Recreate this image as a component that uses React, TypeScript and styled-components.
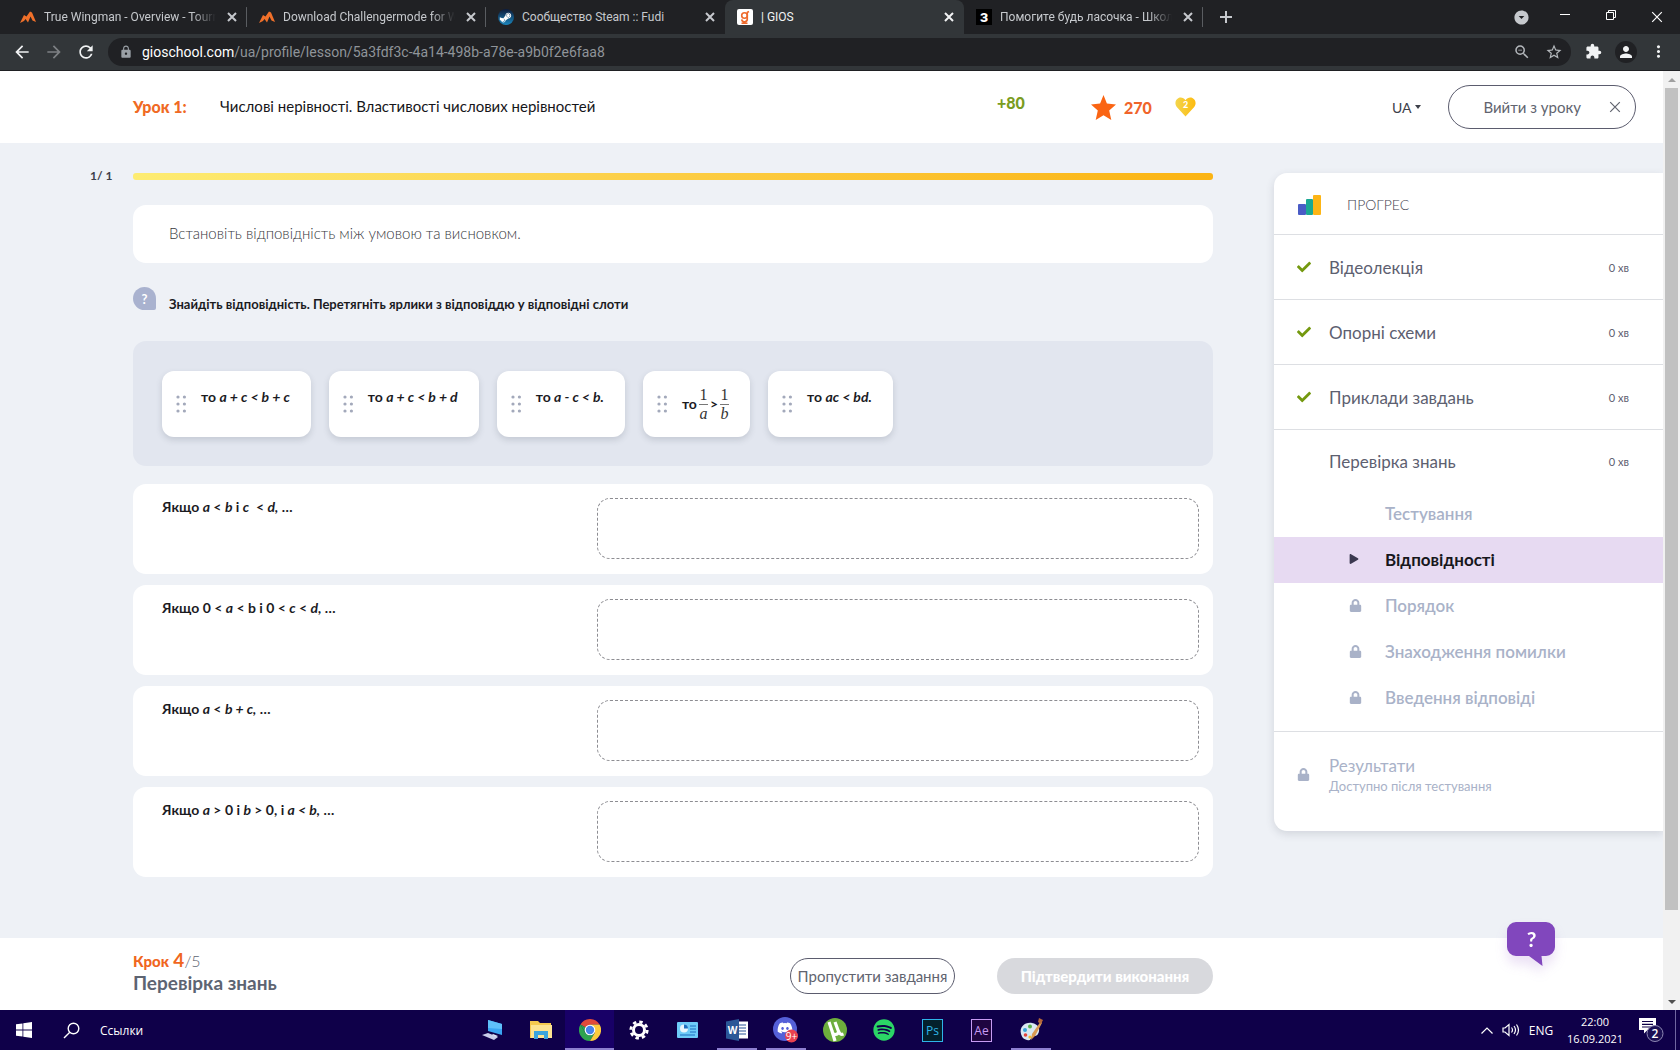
import React from "react";
import styled, { createGlobalStyle, css } from "styled-components";
import { FaCheck, FaDiscord, FaLock, FaPlay, FaSpotify, FaSteamSymbol } from "react-icons/fa";
import {
  MdArrowBack,
  MdArrowDropDownCircle,
  MdArrowForward,
  MdExtension,
  MdLock,
  MdMoreVert,
  MdPerson,
  MdRefresh,
  MdStarBorder,
  MdZoomOut,
} from "react-icons/md";

const ui = `"Open Sans", "Noto Sans", sans-serif`;
const chromeUi = `Roboto, "Open Sans", sans-serif`;
const brand = `Lato, "Open Sans", sans-serif`;

const GlobalStyle = createGlobalStyle`
  *, *::before, *::after { box-sizing: border-box; }
  body { margin: 0; background: #eef1f6; font-family: ${brand}; color: #1b1b1f; }
  button, select { font: inherit; color: inherit; background: none; border: 0; margin: 0; padding: 0; }
  svg { display: block; flex: none; }
  a { color: inherit; text-decoration: none; }
  h1, h2, p, ul { margin: 0; padding: 0; font: inherit; list-style: none; }
`;

const Screen = styled.div`
  display: flex;
  flex-direction: column;
  min-height: 100vh;
`;

/* ---------- browser ---------- */

const TabStrip = styled.div`
  display: flex;
  height: 34px;
  padding-left: 8px;
  background: #202124;
  color: #c6c9cd;
  font-family: ${chromeUi};
`;

const Tab = styled.div<{ $active?: boolean; $line?: boolean }>`
  display: flex;
  align-items: center;
  gap: 8px;
  width: 239px;
  height: 34px;
  padding: 0 7px 0 12px;
  font-size: 12px;
  border-radius: 8px 8px 0 0;
  background: ${(p) => (p.$active ? "#323639" : "transparent")};
  color: ${(p) => (p.$active ? "#f1f3f4" : "#c6c9cd")};
  ${(p) =>
    p.$line &&
    css`
      background: linear-gradient(#5a5d61, #5a5d61) right center / 1px 20px no-repeat;
    `}
`;

const TabTitle = styled.span<{ $fade?: boolean }>`
  flex: 1;
  overflow: hidden;
  white-space: nowrap;
  line-height: 18px;
  ${(p) =>
    p.$fade &&
    css`
      mask-image: linear-gradient(90deg, #000 86%, transparent);
    `}
`;

const IconButton = styled.button<{ $w?: number; $dim?: boolean }>`
  display: flex;
  flex: none;
  align-items: center;
  justify-content: center;
  width: ${(p) => p.$w ?? 16}px;
  color: ${(p) => (p.$dim ? "#7d8084" : "inherit")};
`;

const WindowControls = styled.div`
  display: flex;
  align-items: center;
  margin-left: auto;
  color: #fff;
`;

const Toolbar = styled.div`
  display: flex;
  align-items: center;
  height: 37px;
  padding: 0 5px 1px 6px;
  background: #323639;
  border-bottom: 1px solid #1f2023;
  color: #f1f3f4;
`;

const AddressBar = styled.div`
  display: flex;
  flex: 1;
  align-items: center;
  height: 28px;
  margin: 0 6px;
  padding: 0 1px 0 11px;
  border-radius: 14px;
  background: #202124;
  color: #b4b8bc;
  font-family: ${chromeUi};
  font-size: 14px;
`;

const Address = styled.div`
  flex: 1;
  margin-left: 9px;
  color: #8f9499;
  line-height: 20px;
  white-space: nowrap;
  overflow: hidden;
  b { font-weight: 400; color: #fff; }
`;

const Avatar = styled.span`
  display: flex;
  align-items: center;
  justify-content: center;
  width: 22px;
  height: 22px;
  border-radius: 50%;
  background: #202124;
`;

const Viewport = styled.div`
  display: flex;
  flex: 1;
`;

const Page = styled.div`
  display: flex;
  flex: 1;
  flex-direction: column;
  min-width: 0;
`;

const Scrollbar = styled.div`
  display: flex;
  flex-direction: column;
  width: 17px;
  background: #f1f1f1;
`;

const ScrollArrow = styled.button<{ $down?: boolean }>`
  display: flex;
  align-items: center;
  justify-content: center;
  height: 17px;
  &::after {
    content: "";
    border: 4px solid transparent;
    border-top-width: ${(p) => (p.$down ? 4 : 0)}px;
    border-bottom-width: ${(p) => (p.$down ? 0 : 4)}px;
    border-top-color: #505050;
    border-bottom-color: #a0a0a0;
  }
`;

const ScrollTrack = styled.div`
  flex: 1;
  padding: 0 2px;
`;

const ScrollThumb = styled.div`
  height: calc(91% - 2px);
  background: #c1c1c1;
`;

/* ---------- lesson header ---------- */

const Header = styled.header`
  display: flex;
  align-items: center;
  height: 72px;
  padding: 0 27px 0 133px;
  background: #fff;
`;

const Lesson = styled.div`
  display: flex;
  flex: 1;
  align-items: center;
  padding-bottom: 2px;
  color: #16161a;
  font-size: 15px;
`;

const LessonNumber = styled.b`
  width: 87px;
  color: #f06a24;
  font-size: 16px;
  font-weight: 900;
`;

const Score = styled.div`
  display: flex;
  align-items: center;
  width: 395px;
  font-size: 16px;
  font-weight: 900;
`;

const Gained = styled.span`
  width: 94px;
  padding-bottom: 10px;
  color: #7a9c1e;
`;

const Stars = styled.span`
  display: flex;
  align-items: center;
  gap: 8px;
  width: 84px;
  color: #f0642a;
`;

const Language = styled.label`
  display: flex;
  align-items: center;
  gap: 3px;
  width: 56px;
  color: #3d4049;
  font-size: 14px;
  select { appearance: none; width: 20px; }
`;

const Caret = styled.span`
  border: 3px solid transparent;
  border-top: 4px solid #3d4049;
  border-bottom: 0;
`;

const OutlineButton = styled.button<{ $w: number; $h: number }>`
  display: flex;
  align-items: center;
  justify-content: center;
  gap: 28px;
  width: ${(p) => p.$w}px;
  height: ${(p) => p.$h}px;
  border: 1px solid #5b5c6e;
  border-radius: ${(p) => p.$h / 2}px;
  background: #fff;
  color: #61646f;
  font-size: 15px;
  white-space: nowrap;
`;

const ExitButton = styled(OutlineButton)`
  justify-content: flex-end;
  padding-right: 14px;
`;

/* ---------- lesson body ---------- */

const Body = styled.main`
  display: grid;
  grid-template-columns: 43px minmax(0, 1fr) 389px;
  flex: 1;
  align-items: start;
  padding: 30px 0 60px 90px;
  background: #eef1f6;
`;

const Counter = styled.span`
  color: #3d4049;
  font-size: 12px;
  font-weight: 700;
  line-height: 5px;
`;

const Work = styled.div`
  display: flex;
  flex-direction: column;
  margin-right: 61px;
`;

const ProgressLine = styled.div`
  height: 7px;
  border-radius: 3px;
  background: linear-gradient(90deg, #fdec72, #fcd049 45%, #fbb413);
`;

const Statement = styled.p`
  margin-top: 25px;
  padding: 17px 36px 19px;
  border-radius: 13px;
  background: #fff;
  color: #37383d;
  font-size: 15px;
  font-weight: 300;
  line-height: 22px;
`;

const Hint = styled.div`
  display: flex;
  gap: 13px;
  margin-top: 24px;
  font-size: 13px;
  font-weight: 700;
  line-height: 20px;
  p { padding-top: 7px; }
`;

const HintMark = styled.span`
  display: flex;
  align-items: center;
  justify-content: center;
  width: 23px;
  height: 23px;
  border-radius: 12px 12px 2px 12px;
  background: #a9b2cf;
  color: #fff;
  font-size: 13px;
`;

const Labels = styled.div`
  display: flex;
  flex-wrap: wrap;
  gap: 18px;
  margin-top: 27px;
  padding: 30px 29px 29px;
  border-radius: 13px;
  background: #e2e6ef;
`;

const Label = styled.button`
  display: flex;
  align-items: center;
  gap: 15px;
  height: 66px;
  padding: 0 21px 0 14px;
  border-radius: 12px;
  background: #fff;
  box-shadow: 0 3px 6px rgba(60, 70, 90, 0.18);
  font-size: 14px;
  font-weight: 700;
  line-height: 20px;
  white-space: nowrap;
`;

const LabelText = styled.span<{ $middle?: boolean }>`
  display: flex;
  align-items: center;
  gap: 2px;
  padding-bottom: ${(p) => (p.$middle ? 0 : 14)}px;
`;

const Fraction = styled.span`
  display: inline-flex;
  flex-direction: column;
  align-items: center;
  width: 9px;
  color: #333;
  font-family: "Liberation Serif", serif;
  font-size: 16px;
  font-weight: 400;
  line-height: 18px;
  span { width: 9px; border-bottom: 1px solid #777; }
`;

const Slots = styled.div`
  display: flex;
  flex-direction: column;
  gap: 11px;
  margin-top: 18px;
`;

const Slot = styled.div`
  display: grid;
  grid-template-columns: minmax(0, 435fr) minmax(0, 602fr);
  height: 90px;
  padding: 14px 14px 15px 29px;
  border-radius: 13px;
  background: #fff;
  font-size: 14px;
  font-weight: 700;
  line-height: 17px;
`;

const DropZone = styled.div`
  border: 1px dashed #8d8d92;
  border-radius: 13px;
`;

/* ---------- progress panel ---------- */

const Panel = styled.aside`
  border-radius: 13px 0 0 13px;
  background: #fff;
  box-shadow: 0 3px 8px rgba(60, 70, 90, 0.16);
  color: #5d6070;
`;

const PanelHead = styled.h2`
  display: flex;
  align-items: center;
  gap: 26px;
  height: 62px;
  padding: 2px 0 0 24px;
  border-bottom: 1px solid #dddfe3;
  font-size: 14px;
  font-weight: 300;
  color: #3f424e;
`;

const Step = styled.a<{ $open?: boolean }>`
  display: flex;
  align-items: center;
  height: ${(p) => (p.$open ? 62 : 65)}px;
  padding: 0 34px 0 23px;
  border-bottom: ${(p) => (p.$open ? "0" : "1px solid #dddfe3")};
  font-size: 17px;
  small { margin-left: auto; font-size: 11px; }
`;

const StepMark = styled.span`
  width: 32px;
`;

const SubSteps = styled.ul`
  margin-top: -1px;
  padding-bottom: 10px;
  border-bottom: 1px solid #dddfe3;
`;

const SubStep = styled.li<{ $current?: boolean }>`
  display: flex;
  align-items: center;
  height: 46px;
  padding: 0 0 2px 75px;
  background: ${(p) => (p.$current ? "#e7daf2" : "transparent")};
  color: ${(p) => (p.$current ? "#17171c" : "#a9b2c8")};
  font-size: 17px;
  font-weight: ${(p) => (p.$current ? 700 : 600)};
  svg { color: ${(p) => (p.$current ? "#3b3850" : "#a9b2c8")}; }
`;

const SubMark = styled.span`
  width: 36px;
`;

const Results = styled.div`
  display: flex;
  align-items: center;
  height: 99px;
  padding: 0 23px 14px;
  color: #a9b2c8;
  font-size: 17px;
  line-height: 22px;
  small { display: block; font-size: 13px; line-height: 18px; }
`;

/* ---------- footer ---------- */

const Footer = styled.footer`
  position: relative;
  display: flex;
  align-items: center;
  height: 72px;
  padding: 4px 450px 0 133px;
  background: #fff;
`;

const StepName = styled.div`
  flex: 1;
  padding-bottom: 10px;
  color: #5d6472;
  font-size: 19px;
  font-weight: 700;
  line-height: 22px;
`;

const StepCount = styled.p`
  font-size: 16px;
  font-weight: 300;
  b { color: #f0661e; font-size: 15px; font-weight: 900; }
  strong { color: #f0661e; font-size: 19px; font-weight: 700; }
`;

const ConfirmButton = styled.button`
  width: 216px;
  height: 36px;
  margin-left: 42px;
  border-radius: 18px;
  background: #d8d9dd;
  color: #fff;
  font-size: 15px;
  font-weight: 900;
  white-space: nowrap;
`;

const ChatButton = styled.button`
  position: absolute;
  right: 108px;
  top: -16px;
  filter: drop-shadow(0 8px 6px rgba(130, 70, 190, 0.16));
`;

/* ---------- taskbar ---------- */

const Taskbar = styled.div`
  display: flex;
  align-items: stretch;
  height: 40px;
  background: #0f0049;
  color: #fff;
  font-family: ${ui};
  font-size: 12px;
`;

const Links = styled.button`
  display: flex;
  align-items: center;
  width: 372px;
  padding-left: 5px;
`;

const TaskButton = styled.button<{ $state?: "open" | "front" }>`
  display: flex;
  align-items: center;
  justify-content: center;
  width: 49px;
  background: ${(p) =>
    p.$state === "front"
      ? "linear-gradient(#8d7fd0, #8d7fd0) bottom / 100% 2px no-repeat, #180067"
      : p.$state === "open"
      ? "linear-gradient(#8d7fd0, #8d7fd0) bottom / 40px 2px no-repeat"
      : "none"};
`;

const Tray = styled.div`
  display: flex;
  align-items: center;
  margin-left: auto;
  padding-right: 4px;
`;

const Clock = styled.time`
  width: 74px;
  font-size: 11px;
  text-align: center;
  line-height: 17px;
`;

const ShowDesktop = styled.button`
  width: 1px;
  height: 40px;
  margin-left: 5px;
  background: #6f66a0;
`;

const AdobeTile = styled.span<{ $c: string; $bg: string }>`
  display: flex;
  align-items: center;
  justify-content: center;
  width: 21px;
  height: 23px;
  border: 1px solid ${(p) => p.$c};
  background: ${(p) => p.$bg};
  color: ${(p) => p.$c};
  font-size: 12px;
`;

/* ---------- drawings ---------- */

const Close = ({ size = 10, w = 2 }: { size?: number; w?: number }) => (
  <svg width={size} height={size} viewBox="0 0 10 10" stroke="currentColor" strokeWidth={w}>
    <path d="M1 1l8 8M9 1l-8 8" />
  </svg>
);

const Challenger = () => (
  <svg width="16" height="16" viewBox="0 0 16 16">
    <path d="M0 14l4-8 2.500 1.500L10 2.500l2 1 4 9.500-3.500-1.500-2-4-2.500 6-2.500-3.500L4 12z" fill="#f0702a" />
  </svg>
);

const Steam = () => (
  <svg width="16" height="16" viewBox="0 0 16 16">
    <defs>
      <linearGradient id="steam" x2="0" y2="1">
        <stop stopColor="#0d1b3a" />
        <stop offset="1" stopColor="#1a86bd" />
      </linearGradient>
    </defs>
    <circle cx="8" cy="8" r="8" fill="url(#steam)" />
    <FaSteamSymbol x="1" y="2" size={13} color="#fff" />
  </svg>
);

const Gios = () => (
  <svg width="16" height="16" viewBox="0 0 16 16" fill="none" stroke="#ee6a2c" strokeWidth="1.600">
    <rect width="16" height="16" rx="2" fill="#fff" stroke="none" />
    <circle cx="7.500" cy="6.500" r="2.800" />
    <path d="M10.300 3v6.500a2.800 2.800 0 0 1-5.600.8M4.500 14.300h6M10 3.500l2-1" />
  </svg>
);

const Znanija = styled.span`
  display: flex;
  flex: none;
  align-items: center;
  justify-content: center;
  width: 16px;
  height: 16px;
  background: #000;
  color: #fff;
  font-size: 13px;
  font-weight: 900;
`;

const Star = () => (
  <svg width="25" height="25" viewBox="0 0 25 25">
    <path d="M12.500 0l3.400 8.500 9.100.9-6.800 6.200L20.300 25l-7.800-4.800L4.700 25l2.100-9.400L0 9.400l9.100-.9z" fill="#fa6413" />
  </svg>
);

const Heart = () => (
  <svg width="21" height="20" viewBox="0 0 21 20">
    <defs>
      <linearGradient id="heart">
        <stop stopColor="#f3d54c" />
        <stop offset="1" stopColor="#fdbb10" />
      </linearGradient>
    </defs>
    <path d="M10.500 19.500L1.800 10C-.6 7 .2 2.500 3.600 1c2.600-1 5.300 0 6.900 2.200C12.100 1 14.800 0 17.400 1c3.400 1.500 4.200 6 1.800 9z" fill="url(#heart)" />
    <text x="10.500" y="11" fontSize="9" fontWeight="900" textAnchor="middle" fill="#fff">2</text>
  </svg>
);

const Bars = () => (
  <svg width="23" height="20" viewBox="0 0 23 20">
    <rect y="9" width="8" height="11" rx="1" fill="#4a5cc6" />
    <rect x="8" y="4" width="7" height="16" rx="1" fill="#1ba893" />
    <rect x="15" width="8" height="20" rx="1" fill="#fdb515" />
  </svg>
);

const Grip = () => (
  <svg width="10" height="18" viewBox="0 0 10 18" fill="#a3a9bb">
    {[2, 9, 16].map((y) => (
      <React.Fragment key={y}>
        <circle cx="2" cy={y} r="1.600" />
        <circle cx="8.400" cy={y} r="1.600" />
      </React.Fragment>
    ))}
  </svg>
);

const ChatBubble = () => (
  <svg width="48" height="44" viewBox="0 0 48 44">
    <path d="M9 0h30a9 9 0 0 1 9 9v16a9 9 0 0 1-9 9h-4.500l1 10L22 34H9a9 9 0 0 1-9-9V9a9 9 0 0 1 9-9z" fill="#8147bd" />
    <text x="24.500" y="25" fontSize="21" fontWeight="700" textAnchor="middle" fill="#fff">?</text>
  </svg>
);

const WindowsLogo = () => (
  <svg width="16" height="16" viewBox="0 0 16 16" fill="#fff">
    <path d="M0 2.300L6.500 1.400v6.200H0zM7.300 1.300L16 0v7.600H7.300zM0 8.400h6.500v6.200L0 13.700zM7.300 8.400H16V16l-8.700-1.300z" />
  </svg>
);

const SearchGlass = () => (
  <svg width="17" height="17" viewBox="0 0 17 17" fill="none" stroke="#fff" strokeWidth="1.400">
    <circle cx="10.500" cy="6.500" r="5.300" />
    <path d="M6.800 10.300L1 16" />
  </svg>
);

const Computer = () => (
  <svg width="22" height="22" viewBox="0 0 22 22">
    <path d="M7 1l14 4v11L7 12z" fill="#3aa5f2" />
    <path d="M7 1l14 4v5L7 9z" fill="#5fc0fa" />
    <path d="M1 16l6-2 10 4-4 3z" fill="#c9cdea" />
    <path d="M12 15l5 2-2 1-4-2z" fill="#dfe3f5" />
  </svg>
);

const Folder = () => (
  <svg width="22" height="20" viewBox="0 0 22 20">
    <path d="M0 1h8l2 2h11v15H0z" fill="#f5c94f" />
    <path d="M1 5h21v13H1z" fill="#fde491" />
    <path d="M4 11h14v8h-4v-4H8v4H4z" fill="#3aa4dd" />
  </svg>
);

const Chrome = () => (
  <svg width="22" height="22" viewBox="0 0 22 22">
    <path d="M11 11L1.470 5.500A11 11 0 0 1 20.530 5.500L11 5.500z" fill="#e04a3a" />
    <path d="M11 11L6.200 13.800 1.470 5.500z" fill="#2ea350" />
    <path d="M1.470 5.500L6.200 13.800 11 16.500 15.800 13.800 11 22A11 11 0 0 1 1.470 5.500z" fill="#2ea350" />
    <path d="M11 5.500h9.530A11 11 0 0 1 11 22l4.800-8.200z" fill="#fccb3d" />
    <circle cx="11" cy="11" r="5.300" fill="#fff" />
    <circle cx="11" cy="11" r="4.200" fill="#4683ea" />
  </svg>
);

const Gear = () => (
  <svg width="20" height="20" viewBox="0 0 20 20" fill="none" stroke="#fff">
    <circle cx="10" cy="10" r="5.500" strokeWidth="3" />
    <circle cx="10" cy="10" r="8.200" strokeWidth="2.800" strokeDasharray="3.440 3" />
  </svg>
);

const ControlPanel = () => (
  <svg width="21" height="16" viewBox="0 0 21 16">
    <rect width="21" height="16" rx="1" fill="#6ecbf8" />
    <circle cx="7" cy="6.500" r="4" fill="#e8f6fd" />
    <path d="M7 6.500V2.500a4 4 0 0 1 4 4z" fill="#1c6fc0" />
    <path d="M13 4h6M13 7h6M13 10h6M3 13h15" stroke="#1c6fc0" />
  </svg>
);

const Word = () => (
  <svg width="22" height="22" viewBox="0 0 22 22">
    <rect x="11" y="2.500" width="11" height="17" fill="#fff" />
    <path d="M13 6h7M13 9h7M13 12h7M13 15h7" stroke="#2b5797" strokeWidth="1.200" />
    <path d="M0 2.500L13 0v22L0 19.500z" fill="#2b5797" />
    <text x="6.500" y="15" fontSize="10" fontWeight="700" textAnchor="middle" fill="#fff">W</text>
  </svg>
);

const Discord = () => (
  <svg width="25" height="26" viewBox="0 0 25 26">
    <circle cx="12" cy="12" r="12" fill="#5560d8" />
    <FaDiscord x="4" y="3" size={16} color="#fff" />
    <circle cx="18.500" cy="19" r="6.500" fill="#e8424f" />
    <text x="18.500" y="23" fontSize="10" textAnchor="middle" fill="#fff">9+</text>
  </svg>
);

const Torrent = () => (
  <svg width="24" height="24" viewBox="0 0 24 24" fill="none" stroke="#fff" strokeWidth="3.200">
    <circle cx="12" cy="12" r="12" fill="#6dae3c" stroke="none" />
    <path d="M6 4l3.500 10.500c1 3 6 2.500 6-1L12 4M15.500 13c1 3 2.500 4 5 3M9 13l3 10" />
  </svg>
);

const Palette = () => (
  <svg width="24" height="24" viewBox="0 0 24 24">
    <path d="M2 16C0 9 6 4 13 5c6 1 9 6 6 11-2 3-4 1-6 3s-1 4-5 3-5-3-6-6z" fill="#d9e8f2" />
    <circle cx="6" cy="12" r="2" fill="#38a5d8" />
    <circle cx="11" cy="8.500" r="2" fill="#59b34a" />
    <circle cx="6.500" cy="17" r="1.800" fill="#e3453c" />
    <circle cx="11" cy="19" r="1.600" fill="#f5b92d" />
    <path d="M22 3L13 16l-1 6 4-4 7-13z" fill="#d99a52" />
    <path d="M20 0l4 2-2 4-3-2z" fill="#b5673a" />
  </svg>
);

const Speaker = () => (
  <svg width="18" height="14" viewBox="0 0 18 14" fill="none" stroke="#fff" strokeWidth="1.200">
    <path d="M1 5h2l4-3.500v11L3 9H1zM9.500 4.500q2 2.500 0 5M12 3q3 4 0 8M14.500 1.500q4 5.500 0 11" />
  </svg>
);

const Notifications = () => (
  <svg width="26" height="26" viewBox="0 0 26 26">
    <path d="M1 1h17v12H9.500L6 16.500V13H1z" fill="#fff" />
    <path d="M4 4.500h11M4 7.300h11M4 10h11" stroke="#0f0049" strokeWidth="1.200" />
    <circle cx="17" cy="16.500" r="8" fill="#1b1054" stroke="#8f89b5" />
    <text x="17" y="21" fontSize="12" fontWeight="600" textAnchor="middle" fill="#fff">2</text>
  </svg>
);

/* ---------- content ---------- */

const tabs = [
  { title: "True Wingman - Overview - Tourn", icon: <Challenger />, line: true, fade: true },
  { title: "Download Challengermode for W", icon: <Challenger />, line: true, fade: true },
  { title: "Сообщество Steam :: Fudi", icon: <Steam /> },
  { title: "| GIOS", icon: <Gios />, active: true },
  { title: "Помогите будь ласочка - Школ", icon: <Znanija>З</Znanija>, line: true, fade: true },
];

const labels = [
  <>то <i>a + c &lt; b + c</i></>,
  <>то <i>a + c &lt; b + d</i></>,
  <>то <i>a - c &lt; b.</i></>,
  null,
  <>то <i>ac &lt; bd.</i></>,
];

const conditions = [
  <>Якщо <i>a</i> &lt; <i>b</i> і <i>c</i>&nbsp; &lt; <i>d,</i> …</>,
  <>Якщо 0 &lt; <i>a</i> &lt; b і 0 &lt; <i>c</i> &lt; <i>d,</i> …</>,
  <>Якщо <i>a</i> &lt; <i>b + c,</i> …</>,
  <>Якщо <i>a</i> &gt; 0 і <i>b</i> &gt; 0, і <i>a &lt; b,</i> …</>,
];

const finished = ["Відеолекція", "Опорні схеми", "Приклади завдань"];
const locked = ["Порядок", "Знаходження помилки", "Введення відповіді"];

const apps: { name: string; icon: React.ReactNode; state?: "open" | "front" }[] = [
  { name: "Computer", icon: <Computer /> },
  { name: "Explorer", icon: <Folder /> },
  { name: "Chrome", icon: <Chrome />, state: "front" },
  { name: "Settings", icon: <Gear /> },
  { name: "Control panel", icon: <ControlPanel /> },
  { name: "Word", icon: <Word />, state: "open" },
  { name: "Discord", icon: <Discord />, state: "open" },
  { name: "Torrent", icon: <Torrent /> },
  { name: "Spotify", icon: <FaSpotify size={22} color="#2bd566" /> },
  { name: "Photoshop", icon: <AdobeTile $c="#2fb4e8" $bg="#04202c">Ps</AdobeTile> },
  { name: "After Effects", icon: <AdobeTile $c="#c79bf2" $bg="#1f0540">Ae</AdobeTile> },
  { name: "Paint", icon: <Palette />, state: "open" },
];

export default function App() {
  return (
    <Screen>
      <GlobalStyle />
      <TabStrip>
        {tabs.map((t) => (
          <Tab key={t.title} $active={t.active} $line={t.line}>
            {t.icon}
            <TabTitle $fade={t.fade}>{t.title}</TabTitle>
            <IconButton aria-label="Close tab"><Close size={10} /></IconButton>
          </Tab>
        ))}
        <IconButton $w={46} aria-label="New tab">
          <svg width="12" height="12" viewBox="0 0 12 12" stroke="currentColor" strokeWidth="2"><path d="M6 0v12M0 6h12" /></svg>
        </IconButton>
        <WindowControls>
          <IconButton $w={42} aria-label="Search tabs"><MdArrowDropDownCircle size={17} color="#c6c9cd" /></IconButton>
          <IconButton $w={46} aria-label="Minimize">
            <svg width="10" height="10" viewBox="0 0 10 10" stroke="#fff"><path d="M0 2.500h10" /></svg>
          </IconButton>
          <IconButton $w={46} aria-label="Restore">
            <svg width="10" height="16" viewBox="0 0 10 16" fill="none" stroke="#fff"><path d="M.5 3.500h7v7h-7zM2.500 3.500v-2h7v7h-2" /></svg>
          </IconButton>
          <IconButton $w={46} aria-label="Close window"><Close size={12} w={1} /></IconButton>
        </WindowControls>
      </TabStrip>
      <Toolbar>
        <IconButton $w={32} aria-label="Back"><MdArrowBack size={20} /></IconButton>
        <IconButton $w={32} $dim aria-label="Forward"><MdArrowForward size={20} /></IconButton>
        <IconButton $w={32} aria-label="Reload"><MdRefresh size={20} /></IconButton>
        <AddressBar>
          <MdLock size={14} color="#9aa0a6" />
          <Address role="textbox" aria-label="Address">
            <b>gioschool.com</b>/ua/profile/lesson/5a3fdf3c-4a14-498b-a78e-a9b0f2e6faa8
          </Address>
          <IconButton $w={32} aria-label="Zoom"><MdZoomOut size={18} /></IconButton>
          <IconButton $w={32} aria-label="Bookmark"><MdStarBorder size={18} /></IconButton>
        </AddressBar>
        <IconButton $w={33} aria-label="Extensions"><MdExtension size={17} /></IconButton>
        <IconButton $w={32} aria-label="Profile"><Avatar><MdPerson size={18} /></Avatar></IconButton>
        <IconButton $w={33} aria-label="Menu"><MdMoreVert size={19} /></IconButton>
      </Toolbar>

      <Viewport>
        <Page>
          <Header>
            <Lesson>
              <LessonNumber>Урок 1:</LessonNumber>
              <h1>Числові нерівності. Властивості числових нерівностей</h1>
            </Lesson>
            <Score>
              <Gained>+80</Gained>
              <Stars><Star />270</Stars>
              <Heart />
            </Score>
            <Language>
              <select aria-label="Language"><option>UA</option></select>
              <Caret />
            </Language>
            <ExitButton $w={188} $h={44}>Вийти з уроку <Close size={12} w={1} /></ExitButton>
          </Header>

          <Body>
            <Counter>1/ 1</Counter>
            <Work>
              <ProgressLine />
              <Statement>Встановіть відповідність між умовою та висновком.</Statement>
              <Hint>
                <HintMark>?</HintMark>
                <p>Знайдіть відповідність. Перетягніть ярлики з відповіддю у відповідні слоти</p>
              </Hint>
              <Labels>
                {labels.map((text, i) => (
                  <Label key={i} draggable>
                    <Grip />
                    {text ? (
                      <LabelText><span>{text}</span></LabelText>
                    ) : (
                      <LabelText $middle>
                        то
                        <Fraction><span>1</span><i>a</i></Fraction>
                        &gt;
                        <Fraction><span>1</span><i>b</i></Fraction>
                      </LabelText>
                    )}
                  </Label>
                ))}
              </Labels>
              <Slots>
                {conditions.map((text, i) => (
                  <Slot key={i}>
                    <p>{text}</p>
                    <DropZone />
                  </Slot>
                ))}
              </Slots>
            </Work>

            <Panel>
              <PanelHead><Bars />ПРОГРЕС</PanelHead>
              {finished.map((name) => (
                <Step key={name} href="#">
                  <StepMark><FaCheck size={14} color="#74990f" /></StepMark>
                  {name}
                  <small>0 хв</small>
                </Step>
              ))}
              <Step href="#" $open>
                <StepMark />
                Перевірка знань
                <small>0 хв</small>
              </Step>
              <SubSteps>
                <SubStep><SubMark />Тестування</SubStep>
                <SubStep $current><SubMark><FaPlay size={10} /></SubMark>Відповідності</SubStep>
                {locked.map((name) => (
                  <SubStep key={name}><SubMark><FaLock size={13} /></SubMark>{name}</SubStep>
                ))}
              </SubSteps>
              <Results>
                <StepMark><FaLock size={13} /></StepMark>
                <div>Результати<small>Доступно після тестування</small></div>
              </Results>
            </Panel>
          </Body>

          <Footer>
            <StepName>
              <StepCount><b>Крок</b> <strong>4</strong>/5</StepCount>
              Перевірка знань
            </StepName>
            <OutlineButton $w={165} $h={36}>Пропустити завдання</OutlineButton>
            <ConfirmButton disabled>Підтвердити виконання</ConfirmButton>
            <ChatButton aria-label="Help"><ChatBubble /></ChatButton>
          </Footer>
        </Page>
        <Scrollbar>
          <ScrollArrow aria-label="Scroll up" />
          <ScrollTrack><ScrollThumb /></ScrollTrack>
          <ScrollArrow $down aria-label="Scroll down" />
        </Scrollbar>
      </Viewport>

      <Taskbar>
        <IconButton $w={48} aria-label="Start"><WindowsLogo /></IconButton>
        <IconButton $w={47} aria-label="Search"><SearchGlass /></IconButton>
        <Links>Ссылки</Links>
        {apps.map((a) => (
          <TaskButton key={a.name} $state={a.state} aria-label={a.name}>{a.icon}</TaskButton>
        ))}
        <Tray>
          <IconButton $w={22} aria-label="Hidden icons">
            <svg width="12" height="7" viewBox="0 0 12 7" fill="none" stroke="#fff" strokeWidth="1.200"><path d="M.5 6.500L6 1l5.500 5.500" /></svg>
          </IconButton>
          <IconButton $w={26} aria-label="Volume"><Speaker /></IconButton>
          <IconButton $w={34} aria-label="Keyboard layout">ENG</IconButton>
          <Clock>22:00<br />16.09.2021</Clock>
          <IconButton $w={38} aria-label="Notifications"><Notifications /></IconButton>
          <ShowDesktop aria-label="Show desktop" />
        </Tray>
      </Taskbar>
    </Screen>
  );
}
